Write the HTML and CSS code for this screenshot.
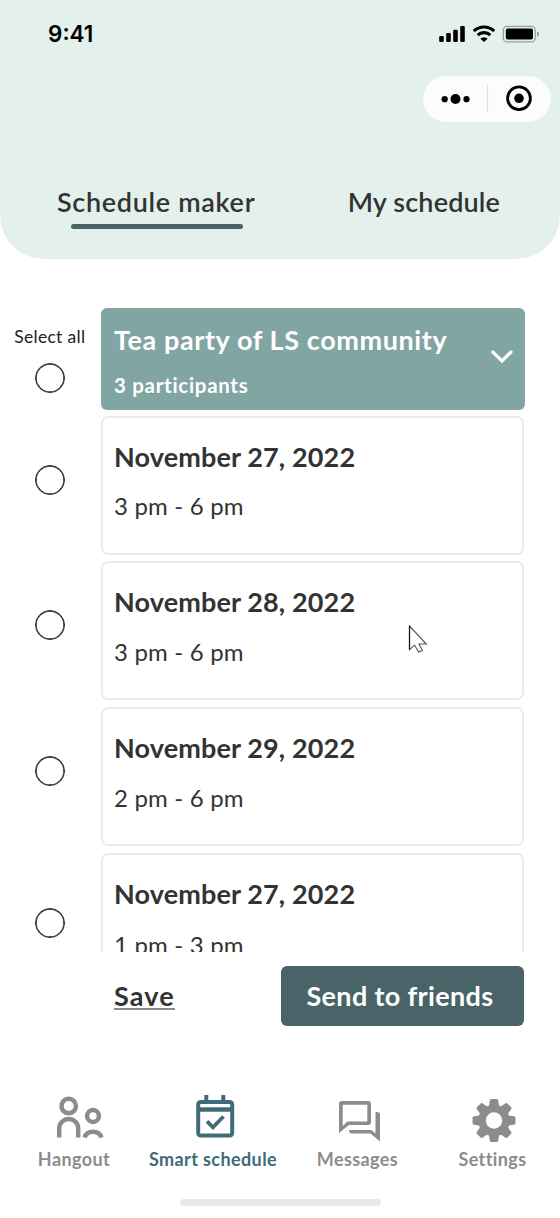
FILE: index.html
```html
<!DOCTYPE html>
<html lang="en">
<head>
<meta charset="utf-8">
<title>Schedule maker</title>
<link rel="stylesheet" href="styles.css">
</head>
<body>
<div class="app">
  <header class="header">
    <div class="status">
      <span class="clock">9:41</span>
      <svg class="status-icons" width="102" height="20" viewBox="0 0 102 20">
        <rect x="1.200" y="12" width="4.600" height="6" rx="1.300"/>
        <rect x="8.200" y="9" width="4.600" height="9" rx="1.300"/>
        <rect x="15.200" y="5.700" width="4.600" height="12.300" rx="1.300"/>
        <rect x="22.200" y="2" width="4.600" height="16" rx="1.300"/>
        <g fill="none" stroke="#000" stroke-width="3.200">
          <path d="M35.800 7.100a14.800 14.800 0 0 1 20.400 0"/>
          <path d="M39.700 11.200a9 9 0 0 1 12.600 0"/>
        </g>
        <path d="M42.300 14.700a5.300 5.300 0 0 1 7.400 0l-3.700 3.400z"/>
        <rect x="65.300" y="2.300" width="32" height="15.600" rx="4" fill="none" stroke="#999f9c" stroke-width="1.300"/>
        <rect x="67.800" y="4.600" width="27.200" height="11" rx="2"/>
        <path d="M99 7.500q2 .8 2 2.600t-2 2.600z" fill="#8f9693"/>
      </svg>
    </div>
    <div class="capsule">
      <svg width="128" height="46" viewBox="0 0 128 46">
        <circle cx="21.700" cy="23.200" r="3.100"/><circle cx="32.500" cy="23" r="5"/><circle cx="43.500" cy="23.200" r="3.100"/>
        <path d="M64.500 9v27" stroke="#dbe0de" stroke-width="1.200"/>
        <circle cx="96" cy="22.300" r="11.400" fill="none" stroke="#000" stroke-width="2.800"/><circle cx="96" cy="22.300" r="4.800"/>
      </svg>
    </div>
    <nav class="tabs">
      <a class="tab tab-active"><span class="tab-maker">Schedule maker</span></a>
      <a class="tab"><span class="tab-mine">My schedule</span></a>
    </nav>
  </header>

  <main class="list">
    <div class="row row-group">
      <div class="pick pick-all"><span class="pick-label">Select all</span><i class="radio"></i></div>
      <div class="group">
        <div>
          <h1 class="group-title">Tea party of LS community</h1>
          <p class="group-sub">3 participants</p>
        </div>
        <svg class="chevron" width="24" height="16" viewBox="0 0 24 16"><path d="M2.800 3 12 12 21 3" fill="none" stroke="#fff" stroke-width="3.200" stroke-linecap="round"/></svg>
      </div>
    </div>
    <div class="row">
      <div class="pick"><i class="radio"></i></div>
      <div class="card"><h2 class="date">November 27, 2022</h2><p class="time">3 pm - 6 pm</p></div>
    </div>
    <div class="row">
      <div class="pick"><i class="radio"></i></div>
      <div class="card"><h2 class="date">November 28, 2022</h2><p class="time">3 pm - 6 pm</p></div>
    </div>
    <div class="row">
      <div class="pick"><i class="radio"></i></div>
      <div class="card"><h2 class="date">November 29, 2022</h2><p class="time">2 pm - 6 pm</p></div>
    </div>
    <div class="row row-last">
      <div class="pick"><i class="radio"></i></div>
      <div class="card"><h2 class="date">November 27, 2022</h2><p class="time">1 pm - 3 pm</p></div>
    </div>
  </main>

  <div class="actions">
    <a class="save">Save</a>
    <button class="send"><span class="send-label">Send to friends</span></button>
  </div>

  <nav class="bottom">
    <a class="item hangout">
      <svg width="50" height="46" viewBox="0 0 50 46" fill="none" stroke="currentColor" stroke-width="4.500">
        <circle cx="13.700" cy="12" r="7.200"/><circle cx="38" cy="22" r="5.900"/>
        <path d="M4.200 43.500V34.500a9.500 9.500 0 0 1 19 0v9M29.500 43.500a9 8.500 0 0 1 17 0"/>
      </svg>
      <span>Hangout</span>
    </a>
    <a class="item smart">
      <svg width="40" height="46" viewBox="0 0 40 46" fill="none" stroke="currentColor" stroke-width="4">
        <rect x="3.200" y="8" width="34" height="33.500" rx="2.500"/>
        <path d="M2 15.500h36" stroke-width="4.500"/><path d="M11.300 1v6M28.300 1v6"/>
        <path d="M12 27.300l6 6 10.500-10.800" stroke-width="3.800"/>
      </svg>
      <span>Smart schedule</span>
    </a>
    <a class="item messages">
      <svg width="44" height="46" viewBox="0 0 44 46" fill="currentColor">
        <path d="M2 39V10a3 3 0 0 1 3-3H31a3 3 0 0 1 3 3v18a3 3 0 0 1-3 3H12zM5.700 32.200 10.200 27.500H30.300V10.700H5.700z" fill-rule="evenodd"/>
        <path d="M38.500 18h1.500a3 3 0 0 1 3 3v26.500l-9.500-8H15a3 3 0 0 1-3-3.500h22.500l4 3.500z"/>
      </svg>
      <span>Messages</span>
    </a>
    <a class="item settings">
      <svg width="44" height="46" viewBox="0 -4 44 46">
        <g fill="currentColor">
          <path id="tooth" d="M17.800 2.500q.2-1.500 1.700-1.500h5q1.500 0 1.700 1.500L27.500 11h-11z"/>
          <use href="#tooth" transform="rotate(45 22 22.500)"/><use href="#tooth" transform="rotate(90 22 22.500)"/>
          <use href="#tooth" transform="rotate(135 22 22.500)"/><use href="#tooth" transform="rotate(180 22 22.500)"/>
          <use href="#tooth" transform="rotate(225 22 22.500)"/><use href="#tooth" transform="rotate(270 22 22.500)"/>
          <use href="#tooth" transform="rotate(315 22 22.500)"/>
        </g>
        <circle cx="22" cy="22.500" r="12" fill="none" stroke="currentColor" stroke-width="7.500"/>
      </svg>
      <span>Settings</span>
    </a>
  </nav>
  <div class="home-bar"></div>
  <svg class="cursor" width="20" height="30" viewBox="0 0 20 30"><path d="M1.500 2v23.800L6.500 21l4.200 7 3.600-1.600L11 20h7.300z" fill="#fff" stroke="#555" stroke-width="1.100"/><path d="M1.500 2v23.500" stroke="#111" stroke-width="1.200"/></svg>
</div>
</body>
</html>
```
FILE: styles.css
```css
* { box-sizing: border-box; }
body { margin: 0; background: #fff; }
h1, h2, p { margin: 0; }
.app {
  position: relative;
  width: 560px; height: 1218px; overflow: hidden;
  display: flex; flex-direction: column;
  font-family: Lato, "Open Sans", sans-serif; color: #333; white-space: nowrap;
}
.header { height: 259px; flex: none; background: #e4f0ec; border-radius: 0 0 44px 44px; display: flex; flex-direction: column; }
.status { height: 76px; padding: 24px 20px 0 48px; display: flex; justify-content: space-between; align-items: flex-start; }
.clock { font: 600 22.500px/20px Inter, sans-serif; color: #000; }
.status-icons { display: block; }
.capsule { width: 128px; height: 46px; margin: 0 9px 0 auto; border-radius: 23px; background: #fafdfb; }
.capsule svg { display: block; }
.tabs { display: flex; justify-content: space-between; padding: 62px 60px 0 57px; font-weight: 600; font-size: 27px; line-height: 36px; }
.tab { display: block; }
.tab-maker { letter-spacing: .68px; }
.tab-mine { letter-spacing: .15px; }
.tab-active::after { content: ""; display: block; width: 172px; height: 5px; margin: 4px 0 0 14px; border-radius: 3px; background: #49656a; }

.list { height: 692.500px; flex: none; padding-top: 49px; overflow: hidden; }
.row { display: grid; grid-template-columns: 100.500px 423px; height: 139px; margin-bottom: 6.750px; }
.row-group { grid-template-columns: 100.500px 424.500px; height: 101.500px; margin-bottom: 6px; }
.pick { display: flex; flex-direction: column; align-items: center; padding: 49px 1px 0 0; }
.pick-all { padding: 19px 1px 0 0; }
.pick-label { font-size: 17.500px; line-height: 20px; letter-spacing: .3px; color: #222; margin-bottom: 16px; }
.radio { width: 30px; height: 30px; border: 1px solid #222; box-shadow: inset 0 0 0 .7px #222; border-radius: 50%; }
.row-last .pick { padding-top: 55px; }
.group { display: flex; justify-content: space-between; background: #81a5a3; border-radius: 6px; padding: 16px 11px 0 13.500px; color: #fff; }
.group-title { font-size: 27px; line-height: 32px; font-weight: 700; letter-spacing: .6px; }
.group-sub { font-size: 20.500px; line-height: 24px; font-weight: 700; letter-spacing: .7px; margin-top: 17px; }
.chevron { margin-top: 25px; }
.card { border: 2px solid #e9ebeb; border-radius: 7px; padding: 23px 0 0 11.500px; }
.date { font-size: 27px; line-height: 32px; font-weight: 700; letter-spacing: .13px; }
.time { font-size: 24px; line-height: 30px; letter-spacing: .18px; margin-top: 18.500px; }
.row-last .time { margin-top: 20.500px; }

.actions { display: flex; justify-content: space-between; align-items: flex-start; padding: 14.500px 36.500px 0 114px; height: 134.500px; flex: none; }
.save { font-size: 27px; line-height: 32px; font-weight: 700; letter-spacing: 1.100px; margin-top: 14px; height: 29.500px; border-bottom: 2px solid #8a8a8a; }
.send { width: 243px; height: 60px; padding: 0 4px 0 0; border: 0; border-radius: 6px; background: #496369; color: #fff; font: 700 27px/60px Lato, sans-serif; letter-spacing: .35px; }

.bottom { display: flex; height: 113px; flex: none; padding-top: 8px; color: #8c8c8c; font-size: 18px; line-height: 22px; font-weight: 700; letter-spacing: .4px; }
.item { display: flex; flex-direction: column; align-items: center; }
.item svg { display: block; margin-bottom: 8px; }
.hangout { width: 148px; }
.hangout svg { margin-left: 12px; }
.smart { width: 130px; color: #416b78; }
.smart svg { margin-left: 4px; }
.messages { width: 159px; }
.messages svg { margin-left: 2px; overflow: visible; }
.settings { width: 111px; }
.settings svg { margin-left: 2px; overflow: visible; }
.home-bar { width: 201px; height: 7px; margin-left: 180px; border-radius: 4px; background: #e8e9eb; }
.cursor { position: absolute; left: 408px; top: 624px; }
```
